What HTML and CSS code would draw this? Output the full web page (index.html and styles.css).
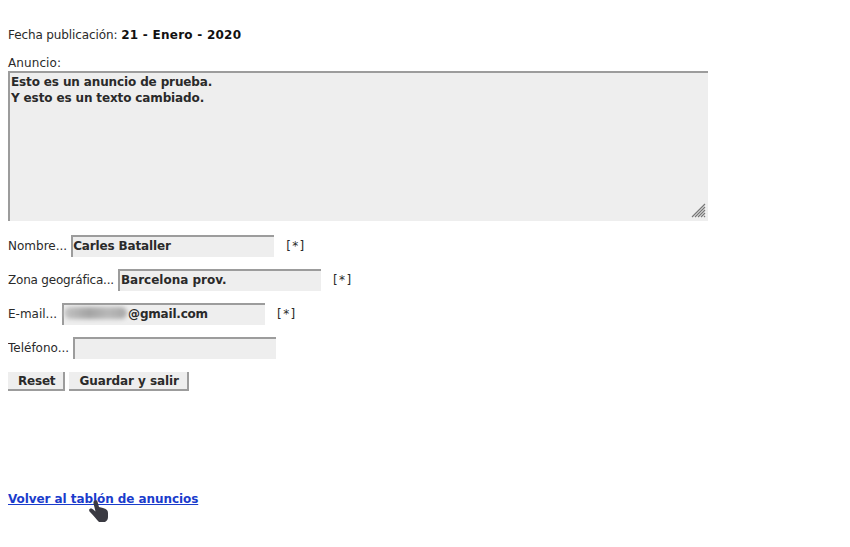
FILE: index.html
```html
<!DOCTYPE html>
<html lang="es">
<head>
<meta charset="utf-8">
<title>Anuncio</title>
<link rel="stylesheet" href="styles.css">
</head>
<body>
<form class="form">
  <p class="pub"><span class="pub-label">Fecha publicación:</span> <b>21 - Enero - 2020</b></p>
  <label class="ad-label" for="ad">Anuncio:</label>
  <div class="ad-wrap">
    <textarea class="ad" id="ad">Esto es un anuncio de prueba.
Y esto es un texto cambiado.</textarea>
    <svg class="grip" width="16" height="16" viewBox="0 0 16 16"><path d="M1 14 L14 1 M4 14 L14 4 M7 14 L14 7 M10 14 L14 10 M13 14 L14 13" stroke="#777" stroke-width="1.2" fill="none"/></svg>
  </div>
  <div class="row"><label for="n">Nombre...</label><input class="field field-name" id="n" value="Carles Bataller"><span class="req">[*]</span></div>
  <div class="row"><label class="label-zone" for="z">Zona geográfica...</label><input class="field" id="z" value="Barcelona prov."><span class="req">[*]</span></div>
  <div class="row"><label class="label-mail" for="e">E-mail...</label><span class="mail"><input class="field field-mail" id="e" value="@gmail.com"><span class="smudge"></span></span><span class="req">[*]</span></div>
  <div class="row"><label class="label-tel" for="t">Teléfono...</label><input class="field" id="t"></div>
  <div class="buttons"><button class="btn btn-reset" type="reset">Reset</button><button class="btn btn-save" type="button">Guardar y salir</button></div>
</form>
<div class="back">
  <a href="#" class="link">Volver al tablón de anuncios</a>
  <svg class="cursor" width="22" height="24" viewBox="0 0 22 24"><path d="M6 1 C7 0 9 0 9.500 1.500 L11 7 L15 8 C18 9 20 10 20 13 L20 17 C20 19 19 21 17 22 L11 22 C9 20 6 16 2 12 C0.500 10.500 1 8.500 3 8.500 C4.500 8.500 6 10 7.500 11.500 L5.500 3.500 C5.300 2.500 5.500 1.500 6 1 Z" fill="#3a3a42"/></svg>
</div>
</body>
</html>
```
FILE: styles.css
```css
html, body { background: #fff; }
body {
  margin: 8px;
  font-family: "DejaVu Sans", sans-serif;
  font-size: 12px;
  color: #2a2a2a;
}
.form { display: flex; flex-direction: column; align-items: flex-start; }
.pub { margin: 20px 0 0; line-height: 15px; }
.pub-label { letter-spacing: -0.11px; }
.pub b { color: #111; letter-spacing: .25px; }
.ad-label { margin-top: 13px; line-height: 15px; letter-spacing: .1px; }
.ad-wrap { position: relative; width: 700px; height: 150px; }
.ad {
  display: block;
  box-sizing: border-box;
  width: 700px;
  height: 150px;
  margin: 0;
  padding: 1px 1px;
  border: 0;
  border-top: 2px solid #9c9c9c;
  border-left: 2px solid #9c9c9c;
  background: #eee;
  font: bold 12px/16px "DejaVu Sans", sans-serif;
  letter-spacing: -0.13px;
  color: #2a2a2a;
  outline: 0;
  resize: none;
}
.grip { position: absolute; right: 1px; bottom: 2px; }
.row { display: flex; align-items: center; height: 22px; margin-top: 12px; }
.ad-wrap + .row { margin-top: 14px; }
.row label { margin-right: 4px; }
.row .label-zone { letter-spacing: -0.2px; }
.row .label-mail { margin-right: 5px; }
.field {
  box-sizing: border-box;
  width: 203px;
  height: 22px;
  margin: 0;
  padding: 0 1px 2px;
  border: 0;
  border-top: 2px solid #9c9c9c;
  border-left: 2px solid #9c9c9c;
  background: #eee;
  font: bold 12px "DejaVu Sans", sans-serif;
  color: #2a2a2a;
  outline: 0;
}
.field-name { padding-left: 0; letter-spacing: -0.14px; }
.req { margin-left: 12px; letter-spacing: 1.4px; }
.mail { position: relative; display: block; }
.field-mail { display: block; padding-left: 64px; letter-spacing: -0.2px; }
.smudge {
  position: absolute;
  left: 2px;
  top: 4px;
  width: 63px;
  height: 12px;
  border-radius: 6px;
  background: linear-gradient(90deg, #c4c4c4, #a4a4a4 40%, #b8b8b8 70%, #a8a8a8);
  filter: blur(2px);
}
.buttons { display: flex; gap: 4px; margin-top: 13px; }
.btn {
  box-sizing: border-box;
  height: 19px;
  margin: 0;
  padding: 0 8px 0 10px;
  border: 0;
  border-right: 2px solid #9c9c9c;
  border-bottom: 2px solid #9c9c9c;
  background: #eee;
  font: bold 12px "DejaVu Sans", sans-serif;
  color: #2a2a2a;
  white-space: nowrap;
}
.btn-reset { letter-spacing: -0.2px; }
.btn-save { letter-spacing: -0.07px; }
.back { position: relative; margin-top: 101px; padding-bottom: 30px; width: max-content; line-height: 15px; }
.link { color: #1a3ccc; font-weight: bold; letter-spacing: -0.07px; }
.cursor { position: absolute; left: 80px; top: 8px; }
```
